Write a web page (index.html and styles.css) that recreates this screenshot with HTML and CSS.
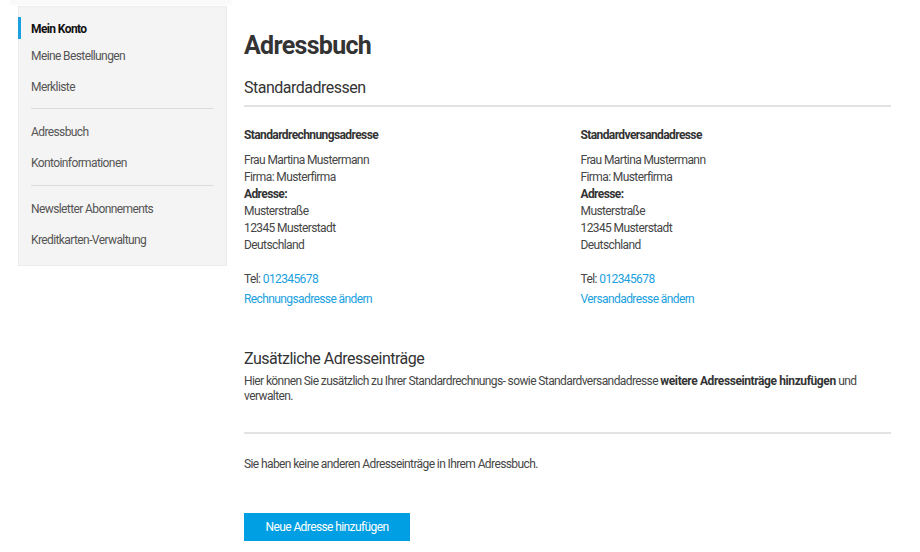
FILE: index.html
```html
<!DOCTYPE html>
<html lang="de">
<head>
  <meta charset="UTF-8">
  <meta name="viewport" content="width=device-width, initial-scale=1.0">
  <title>Adressbuch</title>
  <link rel="stylesheet" href="styles.css">
</head>
<body>

  <div class="topBar"></div>

  <div class="page">

    <aside class="accountNav">
      <ul class="accountNav__group">
        <li class="accountNav__item accountNav__item--active">Mein Konto</li>
        <li class="accountNav__item">Meine Bestellungen</li>
        <li class="accountNav__item">Merkliste</li>
      </ul>
      <ul class="accountNav__group">
        <li class="accountNav__item">Adressbuch</li>
        <li class="accountNav__item">Kontoinformationen</li>
      </ul>
      <ul class="accountNav__group">
        <li class="accountNav__item">Newsletter Abonnements</li>
        <li class="accountNav__item">Kreditkarten-Verwaltung</li>
      </ul>
    </aside>

    <main>
      <h1>Adressbuch</h1>

      <h2 class="sectionTitle sectionTitle--ruled">Standardadressen</h2>

      <div class="addressGrid">
        <div class="addressBox">
          <h3 class="addressBox__title">Standardrechnungsadresse</h3>
          <address>
            Frau Martina Mustermann<br>
            Firma: Musterfirma<br>
            <strong>Adresse:</strong><br>
            Musterstraße<br>
            12345 Musterstadt<br>
            Deutschland<br>
            <br>
            Tel: <a href="#">012345678</a>
          </address>
          <a class="addressBox__edit" href="#">Rechnungsadresse ändern</a>
        </div>

        <div class="addressBox">
          <h3 class="addressBox__title">Standardversandadresse</h3>
          <address>
            Frau Martina Mustermann<br>
            Firma: Musterfirma<br>
            <strong>Adresse:</strong><br>
            Musterstraße<br>
            12345 Musterstadt<br>
            Deutschland<br>
            <br>
            Tel: <a href="#">012345678</a>
          </address>
          <a class="addressBox__edit" href="#">Versandadresse ändern</a>
        </div>
      </div>

      <h2 class="sectionTitle sectionTitle--spaced">Zusätzliche Adresseinträge</h2>
      <p class="intro">Hier können Sie zusätzlich zu Ihrer Standardrechnungs- sowie Standardversandadresse <strong>weitere Adresseinträge hinzufügen</strong> und verwalten.</p>

      <p class="emptyNote">Sie haben keine anderen Adresseinträge in Ihrem Adressbuch.</p>

      <button type="button" class="primaryBtn">Neue Adresse hinzufügen</button>
    </main>

  </div>

</body>
</html>
```

FILE: styles.css
```css
* {
  box-sizing: border-box;
  padding: 0;
  margin: 0;
}
body {
  font-family: Roboto, "Liberation Sans", sans-serif;
  color: #464646;
  background-color: #fff;
  font-size: 12px;
  letter-spacing: -0.6px;
}
ul {
  list-style: none;
}
a {
  color: #1a9fe0;
  text-decoration: none;
}
.topBar {
  height: 5px;
  width: 222px;
  margin-left: 10px;
  background-color: #fafafa;
}
.page {
  display: flex;
  align-items: flex-start;
  gap: 17px;
  padding: 1px 29px 0 18px;
}

/* sidebar */
.accountNav {
  flex: 0 0 209px;
  background-color: #f4f4f4;
  border: 1px solid #ececec;
  padding: 12px 0 9px;
}
.accountNav__group {
  margin: 0 12px;
  padding: 8px 0 6px;
  border-bottom: 1px solid #dcdcdc;
}
.accountNav__group:first-child {
  padding: 0 0 5px;
}
.accountNav__group:last-child {
  border-bottom: none;
  padding-bottom: 0;
}
.accountNav__item {
  height: 31px;
  line-height: 31px;
  color: #555;
}
.accountNav__item--active {
  position: relative;
  color: #111;
  font-weight: 700;
  height: 21px;
  line-height: 21px;
  margin-bottom: 1px;
}
.accountNav__item--active::before {
  content: "";
  position: absolute;
  left: -13px;
  top: -2px;
  width: 3px;
  height: 22px;
  background-color: #1a9fe0;
}

/* main */
main {
  flex: 1;
  padding-top: 25px;
}
main h1 {
  font-size: 25px;
  color: #333;
  font-weight: 700;
  line-height: 30px;
  letter-spacing: -0.7px;
}
.sectionTitle {
  font-size: 16px;
  font-weight: 400;
  color: #333;
  line-height: 20px;
  letter-spacing: -0.5px;
}
.sectionTitle--ruled {
  margin-top: 17px;
  padding-bottom: 7px;
  border-bottom: 2px solid #e3e3e3;
}
.sectionTitle--spaced {
  margin-top: 41px;
}
.addressGrid {
  display: grid;
  grid-template-columns: 1fr 1fr;
  column-gap: 26px;
  padding-top: 20px;
}
.addressBox__title {
  font-size: 12px;
  font-weight: 700;
  color: #333;
  line-height: 17px;
  margin-bottom: 8px;
}
.addressBox address {
  font-style: normal;
  line-height: 17px;
}
.addressBox strong {
  color: #333;
}
.addressBox__edit {
  display: block;
  margin-top: 3px;
  line-height: 17px;
}
.intro {
  margin-top: 5px;
  line-height: 15px;
  padding-bottom: 28px;
  border-bottom: 2px solid #e3e3e3;
}
.intro strong {
  color: #333;
  letter-spacing: -0.4px;
}
.emptyNote {
  margin-top: 22px;
  line-height: 17px;
}
.primaryBtn {
  margin-top: 40px;
  width: 166px;
  height: 28px;
  border: none;
  background-color: #009fe3;
  color: #fff;
  font-family: inherit;
  font-size: 12px;
  letter-spacing: inherit;
  cursor: pointer;
}
```
